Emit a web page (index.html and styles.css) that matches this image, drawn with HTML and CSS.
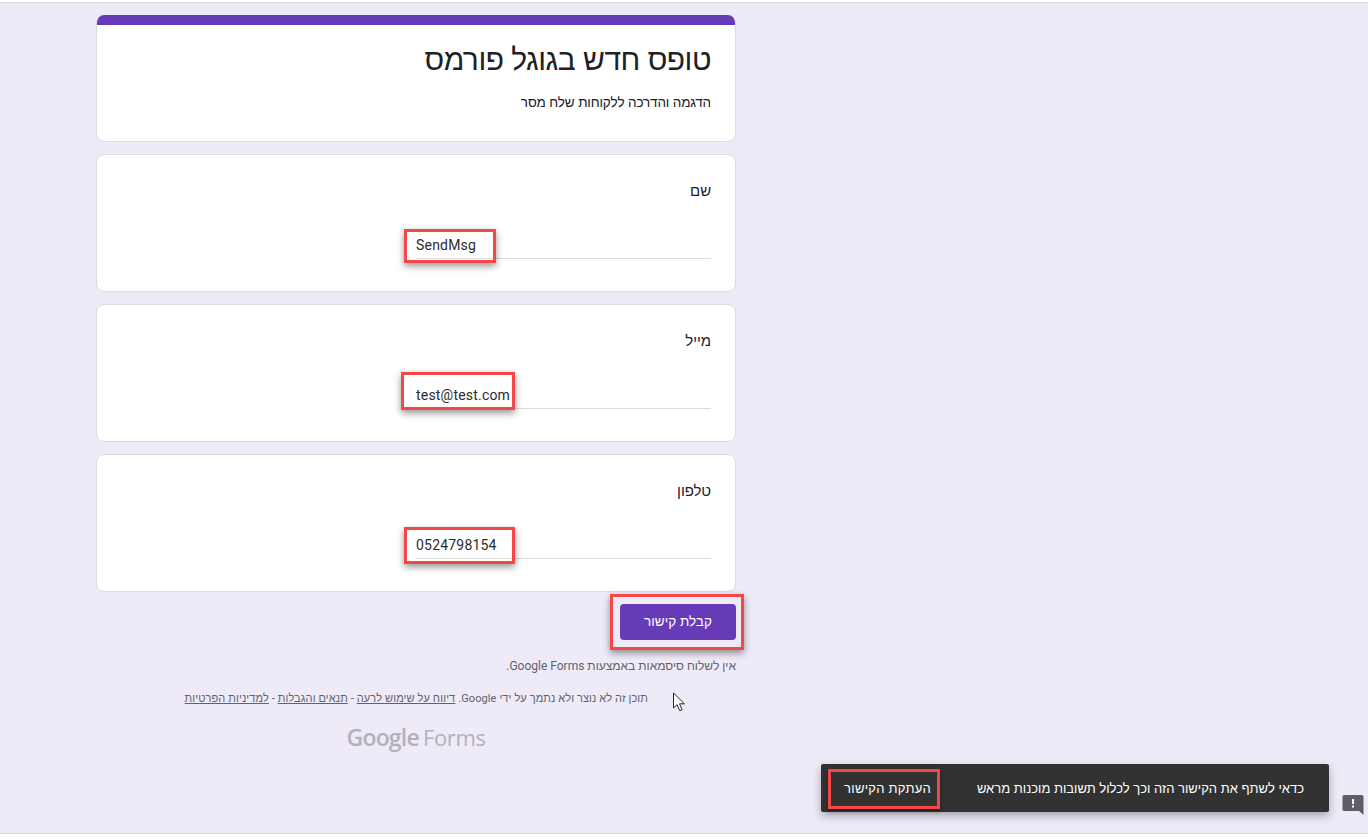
FILE: index.html
```html
<!DOCTYPE html>
<html lang="he">
<head>
<meta charset="utf-8">
<title>טופס חדש בגוגל פורמס</title>
<link rel="stylesheet" href="styles.css">
</head>
<body>
<div class="page">
  <main class="form">
    <section class="card header-card">
      <div class="accent"></div>
      <div class="header-body">
        <h1 class="title">טופס חדש בגוגל פורמס</h1>
        <p class="desc">הדגמה והדרכה ללקוחות שלח מסר</p>
      </div>
    </section>
    <section class="card question">
      <div class="label">שם</div>
      <div class="answer" dir="ltr"><span class="value">SendMsg</span><span class="mark mark-name"></span></div>
    </section>
    <section class="card question">
      <div class="label">מייל</div>
      <div class="answer" dir="ltr"><span class="value">test@test.com</span><span class="mark mark-mail"></span></div>
    </section>
    <section class="card question">
      <div class="label">טלפון</div>
      <div class="answer" dir="ltr"><span class="value">0524798154</span><span class="mark mark-phone"></span></div>
    </section>
    <div class="actions">
      <button class="submit" type="button">קבלת קישור<span class="mark mark-submit"></span></button>
    </div>
    <p class="note">אין לשלוח סיסמאות באמצעות Google Forms.</p>
    <p class="legal">תוכן זה לא נוצר ולא נתמך על ידי Google. <a href="#">דיווח על שימוש לרעה</a> - <a href="#">תנאים והגבלות</a> - <a href="#">למדיניות הפרטיות</a></p>
    <div class="brand" dir="ltr"><span class="brand-google">Google</span> <span class="brand-forms">Forms</span></div>
  </main>
</div>

<svg class="cursor" width="14" height="20" viewBox="0 0 14 20" aria-hidden="true"><path d="M1.500 1v15l3.600-3.300 2.600 6 2.400-1-2.600-5.900h4.900z" fill="#fff" stroke="#222" stroke-width="1"/></svg>

<div class="toast">
  <span class="toast-text">כדאי לשתף את הקישור הזה וכך לכלול תשובות מוכנות מראש</span>
  <span class="toast-action">העתקת הקישור<span class="mark mark-copy"></span></span>
</div>

<svg class="feedback" width="22" height="22" viewBox="0 0 22 22" aria-hidden="true"><path d="M2 1h18a1.500 1.500 0 0 1 1.500 1.500V21L17 17H2A1.500 1.500 0 0 1 .5 15.500v-13A1.500 1.500 0 0 1 2 1z" fill="#5f5d66"/><rect x="10" y="5" width="2" height="5" fill="#fff"/><rect x="10" y="11.500" width="2" height="2" fill="#fff"/></svg>
</body>
</html>
```
FILE: styles.css
```css
* { box-sizing: border-box; }
html, body { margin: 0; height: 100%; }
body {
  background: #fff;
  font-family: "Liberation Sans", Arial, sans-serif;
  color: #202124;
  overflow: hidden;
}
.page {
  margin-top: 2px;
  height: 832px;
  background: #efeaf8;
  border-top: 1px solid #dcdae2;
  border-bottom: 1px solid #d5d3db;
  padding: 12px 0 0 96px;
}
.form { width: 640px; direction: rtl; }
.card {
  background: #fff;
  border: 1px solid #dadce0;
  border-radius: 8px;
  margin-bottom: 12px;
}
.header-card { height: 127px; border-top: 0; overflow: hidden; }
.accent { height: 10px; background: #673ab7; margin: 0 -1px; }
.header-body { padding: 14px 24px 0; }
.title {
  margin: 0;
  font-size: 30px;
  line-height: 42px;
  font-weight: 400;
  letter-spacing: -.5px;
  color: #202124;
}
.desc { margin: 12px 0 0; font-size: 13.5px; line-height: 20px; letter-spacing: -.14px; color: #202124; }
.question { height: 138px; padding: 26px 24px 0; }
.label { font-size: 15px; line-height: 20px; letter-spacing: -.1px; color: #202124; }
.answer {
  position: relative;
  margin-top: 31px;
  width: 295px;
  height: 27px;
  padding-top: 3px;
  border-bottom: 1px solid #dadce0;
  font-family: Roboto, "Liberation Sans", sans-serif;
  font-size: 14px;
  line-height: 20px;
  letter-spacing: .2px;
  color: #2b2c30;
}
.value { display: block; }
.mark {
  position: absolute;
  border: 3px solid #f44848;
  box-shadow: 0 3px 7px rgba(0, 0, 0, .42);
  pointer-events: none;
}
.mark-name { left: -12px; top: -3px; width: 92px; height: 34px; }
.mark-mail { left: -15px; top: -10px; width: 114px; height: 38px; }
.mark-phone { left: -12px; top: -5px; width: 111px; height: 37px; }
.actions { display: flex; justify-content: flex-start; }
.submit {
  position: relative;
  width: 116px;
  height: 36px;
  border: 0;
  border-radius: 4px;
  background: #673ab7;
  color: #fff;
  font: 13.5px/36px "Liberation Sans", Arial, sans-serif;
  padding: 0;
}
.mark-submit { left: -10px; top: -10px; width: 134px; height: 56px; }
.note {
  margin: 18px 0 0;
  font-family: Roboto, "Liberation Sans", sans-serif;
  font-size: 12px;
  line-height: 16px;
  color: #5f6368;
}
.legal {
  margin: 17px 88px 0 0;
  font-family: Roboto, "Liberation Sans", sans-serif;
  font-size: 11px;
  line-height: 16px;
  letter-spacing: .11px;
  color: #5f6368;
  white-space: nowrap;
}
.legal a { color: #5f6368; text-decoration: underline; }
.brand {
  margin-top: 14px;
  text-align: center;
  height: 32px;
  line-height: 32px;
  color: #b3b1b9;
  font-family: "Open Sans", Roboto, sans-serif;
  white-space: nowrap;
}
.brand-google { font-size: 23px; font-weight: 600; letter-spacing: -.8px; }
.brand-forms { font-size: 22px; letter-spacing: -.4px; }
.cursor { position: absolute; left: 672px; top: 692px; }
.toast {
  position: absolute;
  left: 821px;
  top: 764px;
  width: 508px;
  height: 48px;
  direction: rtl;
  background: #323232;
  border-radius: 2px;
  box-shadow: 0 4px 10px rgba(0, 0, 0, .3);
  display: flex;
  align-items: center;
  justify-content: space-between;
  padding: 0 25px 0 24px;
  color: #fff;
  font-size: 13px;
}
.toast-action { position: relative; color: #fff; letter-spacing: .25px; width: 86px; white-space: nowrap; }
.mark-copy { left: -17px; top: -12px; width: 112px; height: 40px; box-shadow: 0 2px 4px rgba(0,0,0,.4); }
.feedback { position: absolute; left: 1342px; top: 794px; }
```
